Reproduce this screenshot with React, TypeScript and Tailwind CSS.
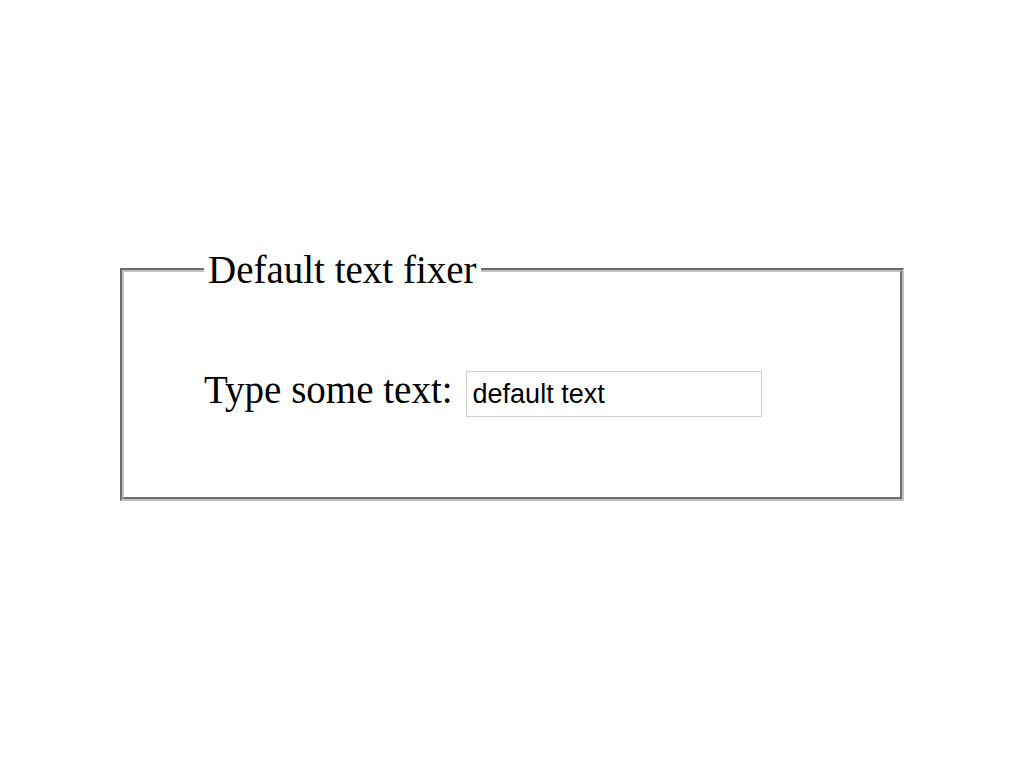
export default function App() {
  return (
    <div className="min-h-screen bg-white flex items-start justify-center pt-[241px] font-['Liberation_Serif','Times_New_Roman',serif] text-black">
      <fieldset className="w-[784px] border-4 [border-style:groove] border-[#c0c0c0] pl-[80px] pr-4 pt-[61px] pb-[78px]">
        <legend className="px-[4px] text-[39px] leading-normal">Default text fixer</legend>
        <div className="flex items-baseline gap-[13px]">
          <label htmlFor="fixer" className="text-[39px] leading-normal">
            Type some text:
          </label>
          <input
            id="fixer"
            type="text"
            defaultValue="default text"
            className="w-[296px] h-[46px] border border-[#d0d0d0] pl-[6px] text-[27px] font-['Liberation_Sans',Arial,sans-serif] outline-none"
          />
        </div>
      </fieldset>
    </div>
  );
}
